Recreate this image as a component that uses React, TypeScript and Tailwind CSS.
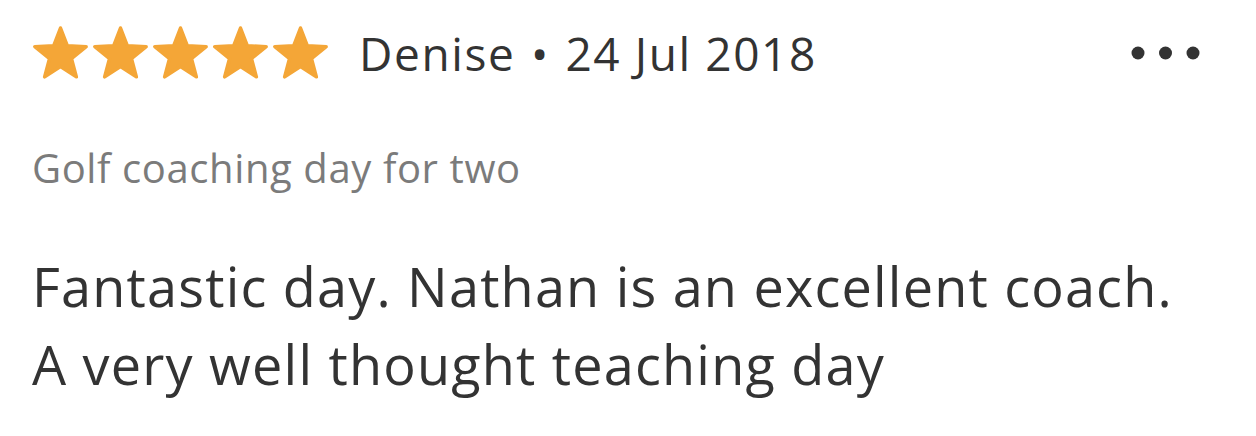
import React from "react";

function Star() {
  const cx = 28.5, cy = 30, R = 27, r = 11.5;
  const pts: string[] = [];
  for (let i = 0; i < 10; i++) {
    const a = -Math.PI / 2 + (i * Math.PI) / 5;
    const rad = i % 2 === 0 ? R : r;
    pts.push(`${(cx + rad * Math.cos(a)).toFixed(2)},${(cy + rad * Math.sin(a)).toFixed(2)}`);
  }
  return (
    <svg width="57" height="57" viewBox="0 0 57 57" className="block shrink-0">
      <polygon points={pts.join(" ")} fill="#F4A637" stroke="#F4A637" strokeWidth="3.5" strokeLinejoin="round" />
    </svg>
  );
}

export default function App() {
  return (
    <div
      className="w-[1256px] h-[436px] bg-white pl-[32px] pr-[56px] pt-[22px]"
      style={{ fontFamily: '"Open Sans", sans-serif' }}
    >
      <div className="flex items-center justify-between h-[62px]">
        <div className="flex items-center">
          <div className="flex items-center gap-[3px]">
            <Star />
            <Star />
            <Star />
            <Star />
            <Star />
          </div>
          <span className="ml-[30px] text-[46px] leading-[62px] tracking-[1.6px] text-[#333333] whitespace-nowrap">
            Denise<span className="mx-[2px]"> • </span>24 Jul 2018
          </span>
        </div>
        <svg width="70" height="16" viewBox="0 0 70 16" className="block">
          <circle cx="8" cy="8" r="6.5" fill="#333333" />
          <circle cx="35.5" cy="8" r="6.5" fill="#333333" />
          <circle cx="63" cy="8" r="6.5" fill="#333333" />
        </svg>
      </div>
      <div className="mt-[57px] text-[40px] leading-[54px] tracking-[0.6px] text-[#7b7b7b]">
        Golf coaching day for two
      </div>
      <div className="mt-[52px] text-[54px] leading-[78px] tracking-[1.2px] text-[#333333]">
        Fantastic day. Nathan is an excellent coach.
        <br />
        A very well thought teaching day
      </div>
    </div>
  );
}
